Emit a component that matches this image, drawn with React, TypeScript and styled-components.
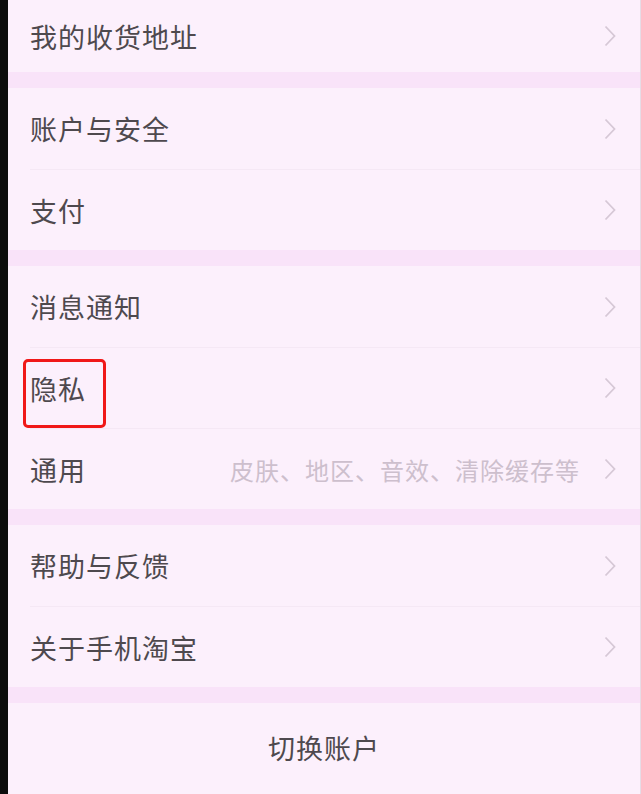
import styled, { createGlobalStyle } from "styled-components";

const GlobalStyle = createGlobalStyle`
  html, body {
    margin: 0;
    padding: 0;
    background: #fcf0fc;
  }
  body {
    font-family: "Noto Sans CJK SC", "Noto Sans", sans-serif;
  }
`;

const Page = styled.div`
  min-height: 794px;
  background: #fcf0fc;
  border-left: 8px solid #0c0c0c;
  border-right: 1px solid #e6dce6;
  box-sizing: border-box;
  display: flex;
  flex-direction: column;
`;

const Gap = styled.div`
  height: 16px;
  background: #f9e3f9;
  flex-shrink: 0;
`;

const Section = styled.div`
  display: flex;
  flex-direction: column;
`;

const Row = styled.div<{ $first?: boolean }>`
  height: ${(p) => (p.$first ? "72px" : "81px")};
  box-sizing: border-box;
  margin-left: 22px;
  padding-right: 24px;
  display: flex;
  align-items: center;
  & + & {
    border-top: 1px solid #f5e8f5;
  }
`;

const Label = styled.span<{ $marked?: boolean }>`
  position: relative;
  font-size: 27px;
  color: #4e494e;
  letter-spacing: 1px;
  ${(p) =>
    p.$marked &&
    `
    &::after {
      content: "";
      position: absolute;
      left: -7px;
      right: -20px;
      top: -10px;
      bottom: -20px;
      border: 3px solid #f01818;
      border-radius: 5px;
    }
  `}
`;

const Hint = styled.span`
  margin-left: auto;
  margin-right: 24px;
  font-size: 24px;
  color: #cdbfcd;
  letter-spacing: 1px;
`;

const Chevron = styled.svg<{ $auto?: boolean }>`
  width: 12px;
  height: 22px;
  margin-left: ${(p) => (p.$auto ? "auto" : "0")};
  flex-shrink: 0;
`;

const Switch = styled.div`
  flex: 1;
  display: flex;
  align-items: center;
  justify-content: center;
  padding-bottom: 2px;
  font-size: 27px;
  color: #4e494e;
  letter-spacing: 1px;
`;

const Arrow = ({ auto }: { auto: boolean }) => (
  <Chevron $auto={auto} viewBox="0 0 12 22">
    <path d="M1.5 1.5 L10.5 11 L1.5 20.5" fill="none" stroke="#d6c8d6" strokeWidth="1.8" />
  </Chevron>
);

type Item = { label: string; hint?: string; marked?: boolean };

const sections: Item[][] = [
  [{ label: "我的收货地址" }],
  [{ label: "账户与安全" }, { label: "支付" }],
  [
    { label: "消息通知" },
    { label: "隐私", marked: true },
    { label: "通用", hint: "皮肤、地区、音效、清除缓存等" },
  ],
  [{ label: "帮助与反馈" }, { label: "关于手机淘宝" }],
];

export default function App() {
  return (
    <>
      <GlobalStyle />
      <Page>
        {sections.map((items, si) => (
          <div key={si}>
            {si > 0 && <Gap />}
            <Section>
              {items.map((item) => (
                <Row key={item.label} $first={si === 0}>
                  <Label $marked={item.marked}>{item.label}</Label>
                  {item.hint && <Hint>{item.hint}</Hint>}
                  <Arrow auto={!item.hint} />
                </Row>
              ))}
            </Section>
          </div>
        ))}
        <Gap />
        <Switch>切换账户</Switch>
      </Page>
    </>
  );
}
